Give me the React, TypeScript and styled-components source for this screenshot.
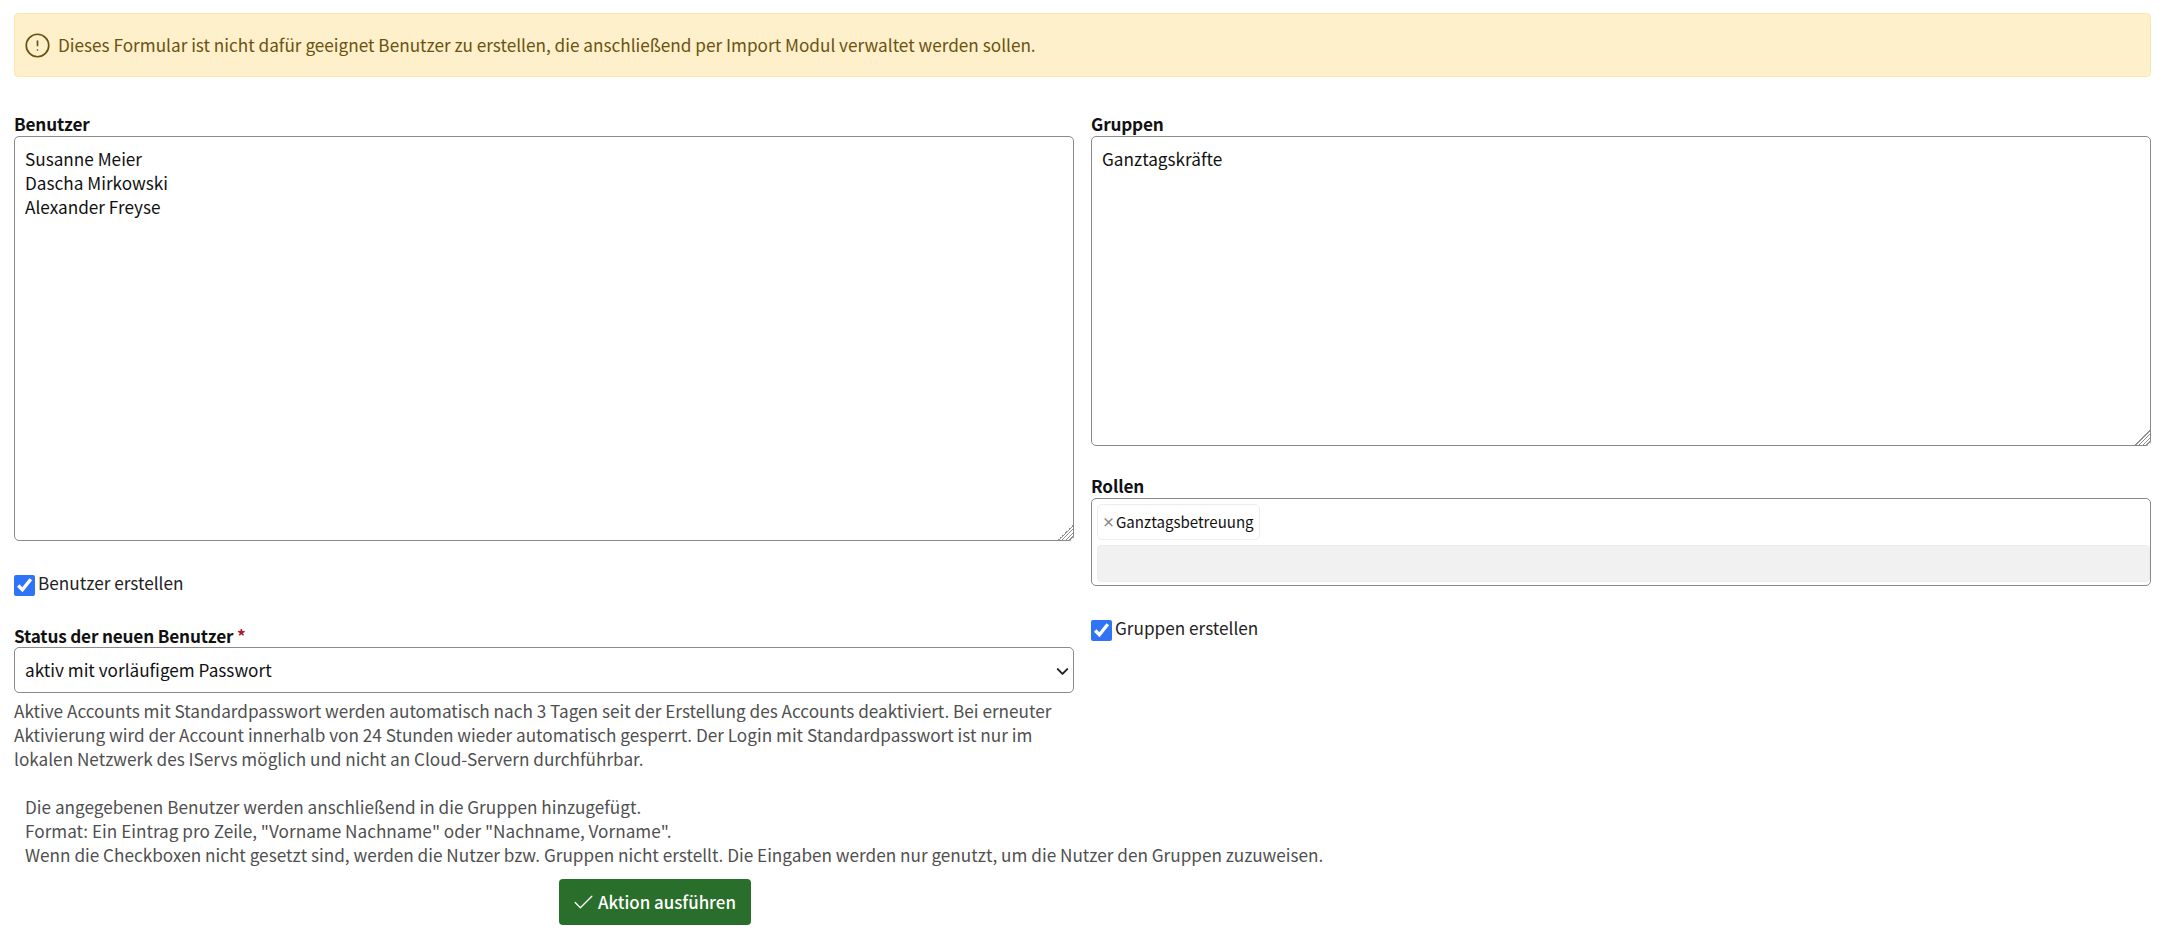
import React from 'react'
import styled, { createGlobalStyle } from 'styled-components'
import { Check, ChevronDown, CircleAlert } from 'lucide-react'

const fontStack = '"Noto Sans CJK SC", "Open Sans", sans-serif'

const GlobalStyle = createGlobalStyle`
  body {
    margin: 0;
    background: #fff;
    color: #111;
    font-family: ${fontStack};
    font-size: 17.18px;
    line-height: 24px;
  }
`

const App = () => (
  <Page>
    <GlobalStyle />
    <Alert>
      <CircleAlert size={27} strokeWidth={1.5} />
      <span>
        Dieses Formular ist nicht dafür geeignet Benutzer zu erstellen, die anschließend per Import
        Modul verwaltet werden sollen.
      </span>
    </Alert>

    <Columns>
      <Column>
        <Label>Benutzer</Label>
        <TextArea $height={405} defaultValue={'Susanne Meier\nDascha Mirkowski\nAlexander Freyse'} />
        <CheckRow>
          <CheckBox type="checkbox" defaultChecked />
          Benutzer erstellen
        </CheckRow>
        <Label $top={28}>
          Status der neuen Benutzer <Required>*</Required>
        </Label>
        <SelectWrap>
          <Select defaultValue="temp">
            <option value="temp">aktiv mit vorläufigem Passwort</option>
          </Select>
          <ChevronDown size={19} strokeWidth={2.5} />
        </SelectWrap>
        <Help>
          Aktive Accounts mit Standardpasswort werden automatisch nach 3 Tagen seit der Erstellung
          des Accounts deaktiviert. Bei erneuter Aktivierung wird der Account innerhalb von 24
          Stunden wieder automatisch gesperrt. Der Login mit Standardpasswort ist nur im lokalen
          Netzwerk des IServs möglich und nicht an Cloud-Servern durchführbar.
        </Help>
      </Column>

      <Column>
        <Label>Gruppen</Label>
        <TextArea $height={310} defaultValue="Ganztagskräfte" />
        <Label $top={28}>Rollen</Label>
        <RoleBox>
          <RoleChip>
            <RoleRemove>×</RoleRemove>
            Ganztagsbetreuung
          </RoleChip>
          <RoleSearch type="text" readOnly />
        </RoleBox>
        <CheckRow>
          <CheckBox type="checkbox" defaultChecked />
          Gruppen erstellen
        </CheckRow>
      </Column>
    </Columns>

    <Notes>
      Die angegebenen Benutzer werden anschließend in die Gruppen hinzugefügt.
      <br />
      Format: Ein Eintrag pro Zeile, "Vorname Nachname" oder "Nachname, Vorname".
      <br />
      Wenn die Checkboxen nicht gesetzt sind, werden die Nutzer bzw. Gruppen nicht erstellt. Die
      Eingaben werden nur genutzt, um die Nutzer den Gruppen zuzuweisen.
    </Notes>

    <Actions>
      <SubmitButton type="button">
        <Check size={25} strokeWidth={1.25} />
        Aktion ausführen
      </SubmitButton>
    </Actions>
  </Page>
)

const Page = styled.div`
  padding: 13px 14px 24px;
`

const Alert = styled.div`
  box-sizing: border-box;
  display: flex;
  align-items: center;
  gap: 7px;
  height: 64px;
  padding: 0 9px;
  background: #fdf0cb;
  border: 1px solid #fae7b0;
  border-radius: 4px;
  color: #6b5211;

  svg {
    flex-shrink: 0;
  }
`

const Columns = styled.div`
  display: grid;
  grid-template-columns: 1060px 1060px;
  column-gap: 17px;
  margin-top: 35px;
`

const Column = styled.div`
  display: flex;
  flex-direction: column;
  min-width: 0;
`

const Label = styled.label<{ $top?: number }>`
  display: block;
  margin-top: ${({ $top }) => $top || 0}px;
  font-weight: 700;
  letter-spacing: -0.17px;
  color: #111;
`

const Required = styled.span`
  color: #a8182e;
`

const TextArea = styled.textarea<{ $height: number }>`
  box-sizing: border-box;
  display: block;
  width: 100%;
  height: ${({ $height }) => $height}px;
  padding: 10px 10px;
  background: #fff;
  border: 1px solid #8a8a8a;
  border-radius: 5px;
  color: #111;
  font: inherit;
  outline: none;

  &::-webkit-resizer {
    background:
      linear-gradient(135deg, #fff 50%, transparent 50%),
      repeating-linear-gradient(135deg, #8f8f8f 0 1px, #fff 1px 2.6px);
  }
`

const CheckRow = styled.label`
  display: flex;
  align-items: flex-start;
  gap: 3px;
  margin-top: 34px;
  color: #222;
  line-height: 15px;
`

const CheckBox = styled.input`
  flex-shrink: 0;
  width: 21px;
  height: 21px;
  margin: 0;
  accent-color: #2f74f6;
`

const SelectWrap = styled.div`
  position: relative;
  margin-top: -1px;

  svg {
    position: absolute;
    top: 15px;
    right: 2px;
    color: #222;
    pointer-events: none;
  }
`

const Select = styled.select`
  box-sizing: border-box;
  display: block;
  width: 100%;
  height: 46px;
  padding: 0 10px;
  appearance: none;
  background: #fff;
  border: 1px solid #8a8a8a;
  border-radius: 5px;
  color: #111;
  font: inherit;
`

const Help = styled.p`
  margin: 6px 0 0;
  color: #4f4f4f;
`

const RoleBox = styled.div`
  box-sizing: border-box;
  height: 88px;
  padding: 5px 0 3px 5px;
  border: 1px solid #8a8a8a;
  border-radius: 5px;
  background: #fff;
`

const RoleChip = styled.div`
  box-sizing: border-box;
  display: inline-flex;
  align-items: center;
  gap: 4px;
  height: 36px;
  padding: 0 5px 0 4px;
  background: #fff;
  border: 1px solid #ededed;
  border-radius: 5px;
  color: #111;
  font-size: 15.05px;
  vertical-align: top;
`

const RoleRemove = styled.span`
  width: 10px;
  color: #888;
  font-weight: 700;
  font-size: 13px;
  text-align: center;
`

const RoleSearch = styled.input`
  box-sizing: border-box;
  display: block;
  width: 100%;
  height: 37px;
  margin-top: 5px;
  background: #f1f1f1;
  border: 1px solid #ececec;
  border-radius: 4px;
  outline: none;
`

const Notes = styled.p`
  margin: 24px 0 0;
  padding-left: 11px;
  color: #4f4f4f;
`

const Actions = styled.div`
  margin-top: 12px;
  padding-left: 545px;
`

const SubmitButton = styled.button`
  box-sizing: border-box;
  display: inline-flex;
  align-items: center;
  gap: 2px;
  width: 192px;
  height: 46px;
  padding: 0 12px;
  background: #2a6e2b;
  border: 0;
  border-radius: 4px;
  color: #fff;
  font: inherit;
  font-size: 16.9px;
  font-weight: 500;
  white-space: nowrap;
`

export default App
